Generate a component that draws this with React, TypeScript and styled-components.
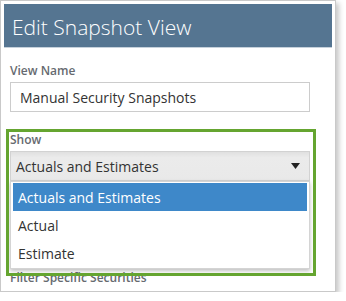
import React, { FC } from 'react';
import styled, { createGlobalStyle } from 'styled-components';

const GlobalStyle = createGlobalStyle`
  body {
    margin: 0;
    background: #fff;
    font-family: 'Open Sans', 'Noto Sans', sans-serif;
  }
`;

const Card = styled.div`
  position: relative;
  box-sizing: border-box;
  width: 336px;
  height: 292px;
  border: 1px solid #c9c9c9;
  padding: 3px;
  background: #fff;
  box-shadow: 3px 3px 5px rgba(0, 0, 0, 0.22);
  overflow: hidden;
`;

const Header = styled.div`
  height: 44px;
  display: flex;
  align-items: center;
  padding: 2px 0 0 8px;
  box-sizing: border-box;
  background: #557591;
  border-bottom: 1px solid #c6d1db;
  color: #fff;
  font-size: 21px;
  font-weight: 300;
`;

const Body = styled.div`
  display: flex;
  flex-direction: column;
  padding: 0 6px;
`;

const Label = styled.div<{ $top: number }>`
  margin-top: ${(p) => p.$top}px;
  height: 17px;
  line-height: 17px;
  font-size: 12px;
  font-weight: 600;
  color: #666a70;
`;

const TextInput = styled.div`
  box-sizing: border-box;
  width: 300px;
  height: 30px;
  margin-top: 3px;
  display: flex;
  align-items: center;
  padding-left: 9px;
  border: 1px solid #cccccc;
  font-size: 14px;
  color: #333;
`;

const SelectWrap = styled.div`
  position: relative;
  width: 300px;
  margin-top: 3px;
`;

const SelectBox = styled.div`
  box-sizing: border-box;
  height: 30px;
  display: flex;
  align-items: center;
  justify-content: space-between;
  padding: 0 9px 0 5px;
  background: linear-gradient(#e0e0e0, #ebebeb 20%, #e9e9e9);
  border: 1px solid #d2d2d2;
  font-size: 14px;
  color: #333;
`;

const Menu = styled.div`
  position: absolute;
  top: 100%;
  left: 0;
  right: 0;
  box-sizing: border-box;
  padding: 1px 2px 1px;
  background: #fff;
  border: 1px solid #d4d4d4;
  box-shadow: 0 2px 4px rgba(0, 0, 0, 0.25);
  z-index: 2;
`;

const Option = styled.div<{ $active?: boolean }>`
  height: 28px;
  display: flex;
  align-items: center;
  padding-left: 5px;
  font-size: 14px;
  background: ${(p) => (p.$active ? '#3e88c9' : 'transparent')};
  color: ${(p) => (p.$active ? '#fff' : '#333')};
`;

const Highlight = styled.div`
  position: absolute;
  left: 5px;
  top: 128px;
  width: 310px;
  height: 147px;
  box-sizing: border-box;
  border: 3px solid #65a530;
  z-index: 3;
  pointer-events: none;
`;

const Arrow: FC = () => (
  <svg width="9" height="6" viewBox="0 0 9 6">
    <path d="M0 0 H9 L4.5 6 Z" fill="#222" />
  </svg>
);

const options = ['Actuals and Estimates', 'Actual', 'Estimate'];

const App: FC = () => (
  <>
    <GlobalStyle />
    <Card>
      <Header>Edit Snapshot View</Header>
      <Body>
        <Label $top={14}>View Name</Label>
        <TextInput>Manual Security Snapshots</TextInput>
        <Label $top={19}>Show</Label>
        <SelectWrap>
          <SelectBox>
            <span>Actuals and Estimates</span>
            <Arrow />
          </SelectBox>
          <Menu>
            {options.map((o, i) => (
              <Option key={o} $active={i === 0}>
                {o}
              </Option>
            ))}
          </Menu>
        </SelectWrap>
        <Label $top={88}>Filter Specific Securities</Label>
      </Body>
      <Highlight />
    </Card>
  </>
);

export default App;
